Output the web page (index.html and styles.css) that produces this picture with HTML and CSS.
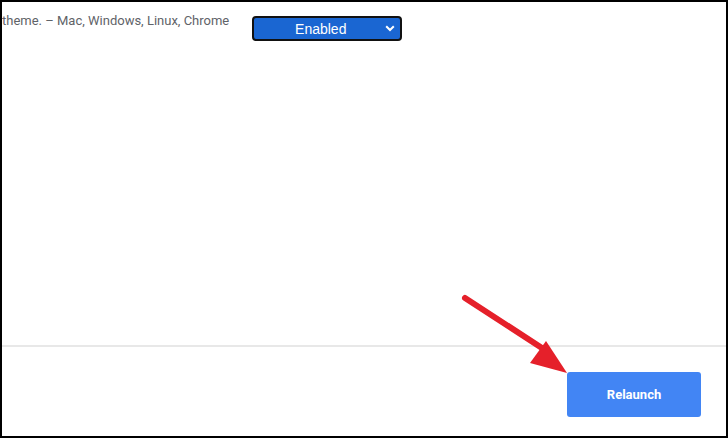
FILE: index.html
```html
<!DOCTYPE html>
<html lang="en">
<head>
    <meta charset="UTF-8">
    <title>Experiments</title>
    <link rel="stylesheet" href="styles.css">
</head>
<body>
    <div class="frame">
        <div class="flag-row">
            <p class="flag-desc">theme. &ndash; Mac, Windows, Linux, Chrome</p>
            <div class="flag-select">
                <span>Enabled</span>
                <svg class="chevron" width="10" height="7" viewBox="0 0 10 7">
                    <path d="M1.2 1.2 L5 5 L8.8 1.2" fill="none" stroke="#fff" stroke-width="2"/>
                </svg>
            </div>
        </div>
        <div class="spacer"></div>
        <div class="footer">
            <button class="relaunch">Relaunch</button>
        </div>
        <!-- red annotation arrow over the page -->
        <svg class="arrow" width="728" height="438" viewBox="0 0 728 438">
            <line x1="465" y1="298" x2="545" y2="350" stroke="#e5202a" stroke-width="6" stroke-linecap="round"/>
            <polygon points="546,341 567,373 530,363" fill="#e5202a"/>
        </svg>
    </div>
</body>
</html>
```

FILE: styles.css
```css
html, body {
    margin: 0;
    padding: 0;
    background-color: #fff;
}
.frame {
    position: relative;
    box-sizing: border-box;
    width: 728px;
    height: 438px;
    border: 2px solid #000;
    display: flex;
    flex-direction: column;
    font-family: Roboto, 'Liberation Sans', sans-serif;
}
.flag-row {
    display: flex;
    align-items: flex-start;
    padding-top: 11px;
}
.flag-desc {
    margin: 0;
    font-size: 13px;
    line-height: 15px;
    color: #5f6368;
    white-space: nowrap;
}
.flag-select {
    box-sizing: border-box;
    margin-left: 23px;
    margin-top: 3px;
    width: 150px;
    height: 25px;
    background-color: #1a66d2;
    border: 2px solid #111;
    border-radius: 4px;
    display: flex;
    align-items: center;
    color: #fff;
    font-family: 'Liberation Sans', Arial, sans-serif;
    font-size: 14px;
}
.flag-select span {
    flex: 1;
    text-align: center;
    padding-left: 6px;
}
.chevron {
    margin: 0 5px 0 4px;
}
.spacer {
    flex: 1;
}
.footer {
    border-top: 2px solid #e8e8e8;
    display: flex;
    justify-content: flex-end;
    padding: 25px 25px 19px 0;
}
.relaunch {
    width: 134px;
    height: 45px;
    border: none;
    border-radius: 3px;
    background-color: #4285f4;
    color: #fff;
    font-family: Roboto, 'Liberation Sans', sans-serif;
    font-size: 13px;
    font-weight: 700;
}
.arrow {
    position: absolute;
    top: -2px;
    left: -2px;
    pointer-events: none;
}
```
